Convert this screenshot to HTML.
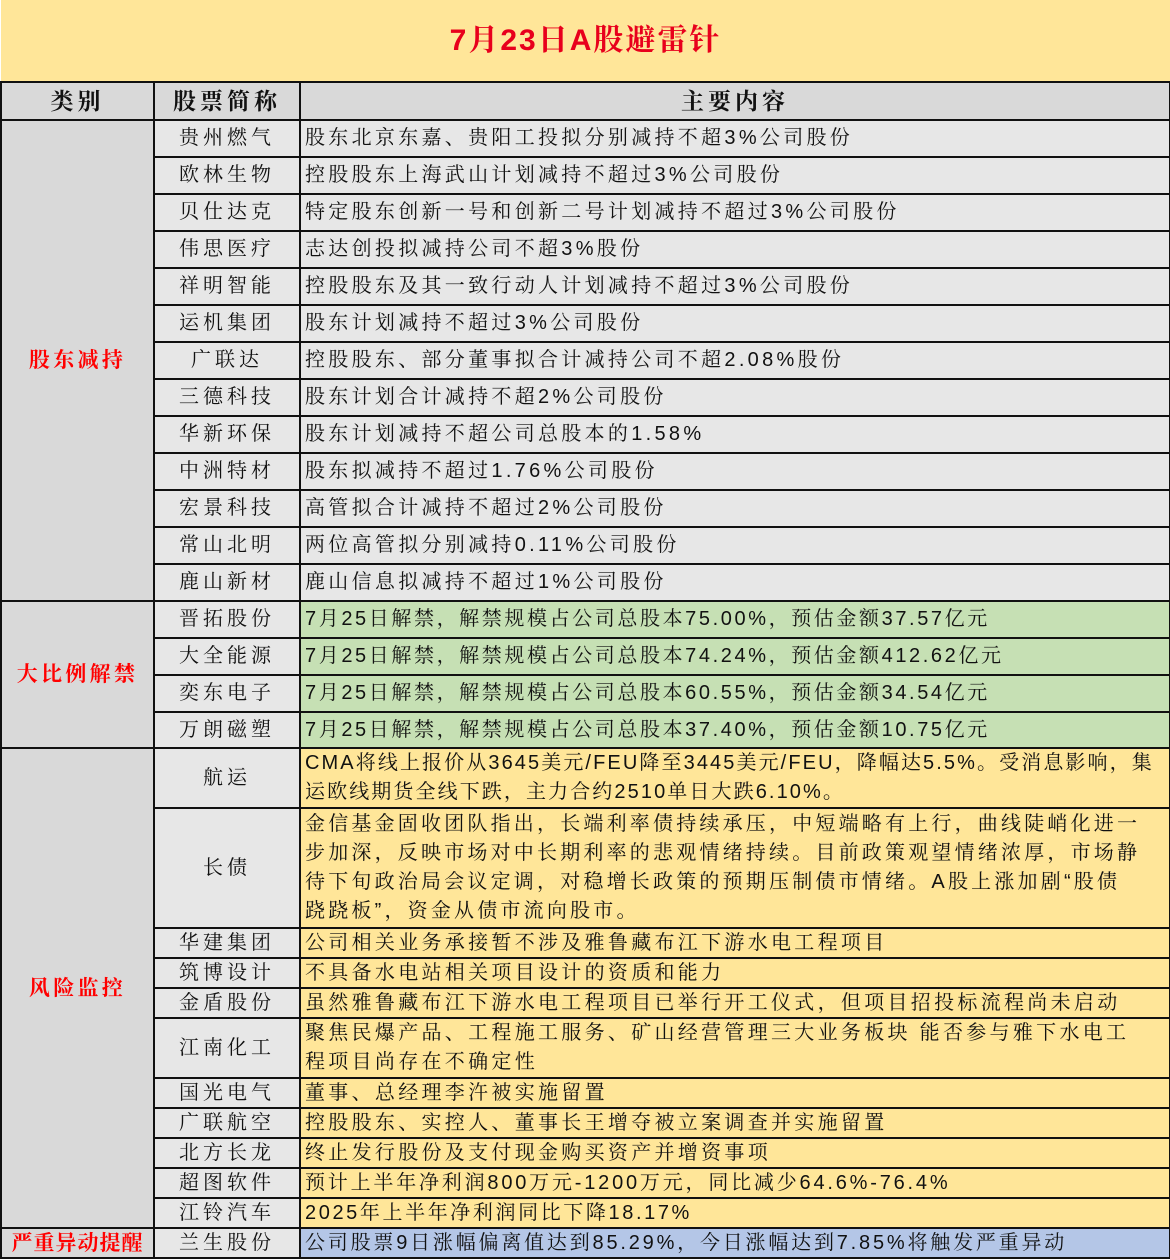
<!DOCTYPE html>
<html><head><meta charset="utf-8"><style>
body{margin:0;width:1170px;height:1260px;overflow:hidden;background:#fff;font-family:"Liberation Sans","Noto Serif CJK SC",serif;}
table{border-collapse:collapse;table-layout:fixed;width:1169px;position:absolute;left:0;top:0}
td{border:2px solid #111;padding:0;font-size:20px;color:#111;letter-spacing:3.3px;line-height:27px;overflow:hidden;white-space:nowrap}
.t{background:#FFE699;color:#e8001c;font-size:30px;font-weight:bold;text-align:center;letter-spacing:2px;border-top:none;border-left:none;border-right:none}
.h{background:#D9D9D9;font-weight:bold;font-size:23px;text-align:center;letter-spacing:4px}
.c{background:#D9D9D9;color:#f00;font-weight:bold;text-align:center;font-size:21px}
.n{background:#E7E7E7;text-align:center;letter-spacing:4px}
.g1{background:#E7E7E7;padding-left:4px}
.g2{background:#C6E0B4;padding-left:4px;letter-spacing:2.6px}
.g3{background:#FFE699;padding-left:4px}
.g4{background:#B4C6E7;padding-left:4px;letter-spacing:2.8px}
.m{line-height:29px}
</style></head><body>
<table>
<col style="width:153px"><col style="width:146px"><col style="width:870px">
<tr style="height:82px"><td class="t" colspan="3">7月23日A股避雷针</td></tr>
<tr style="height:38px"><td class="h">类别</td><td class="h">股票简称</td><td class="h">主要内容</td></tr>
<tr style="height:37px"><td class="c" rowspan="13">股东减持</td><td class="n">贵州燃气</td><td class="g1">股东北京东嘉、贵阳工投拟分别减持不超3%公司股份</td></tr>
<tr style="height:37px"><td class="n">欧林生物</td><td class="g1">控股股东上海武山计划减持不超过3%公司股份</td></tr>
<tr style="height:37px"><td class="n">贝仕达克</td><td class="g1">特定股东创新一号和创新二号计划减持不超过3%公司股份</td></tr>
<tr style="height:37px"><td class="n">伟思医疗</td><td class="g1">志达创投拟减持公司不超3%股份</td></tr>
<tr style="height:37px"><td class="n">祥明智能</td><td class="g1">控股股东及其一致行动人计划减持不超过3%公司股份</td></tr>
<tr style="height:37px"><td class="n">运机集团</td><td class="g1">股东计划减持不超过3%公司股份</td></tr>
<tr style="height:37px"><td class="n">广联达</td><td class="g1">控股股东、部分董事拟合计减持公司不超2.08%股份</td></tr>
<tr style="height:37px"><td class="n">三德科技</td><td class="g1">股东计划合计减持不超2%公司股份</td></tr>
<tr style="height:37px"><td class="n">华新环保</td><td class="g1">股东计划减持不超公司总股本的1.58%</td></tr>
<tr style="height:37px"><td class="n">中洲特材</td><td class="g1">股东拟减持不超过1.76%公司股份</td></tr>
<tr style="height:37px"><td class="n">宏景科技</td><td class="g1">高管拟合计减持不超过2%公司股份</td></tr>
<tr style="height:37px"><td class="n">常山北明</td><td class="g1">两位高管拟分别减持0.11%公司股份</td></tr>
<tr style="height:37px"><td class="n">鹿山新材</td><td class="g1">鹿山信息拟减持不超过1%公司股份</td></tr>
<tr style="height:37px"><td class="c" rowspan="4">大比例解禁</td><td class="n">晋拓股份</td><td class="g2">7月25日解禁，解禁规模占公司总股本75.00%，预估金额37.57亿元</td></tr>
<tr style="height:37px"><td class="n">大全能源</td><td class="g2">7月25日解禁，解禁规模占公司总股本74.24%，预估金额412.62亿元</td></tr>
<tr style="height:37px"><td class="n">奕东电子</td><td class="g2">7月25日解禁，解禁规模占公司总股本60.55%，预估金额34.54亿元</td></tr>
<tr style="height:36px"><td class="n">万朗磁塑</td><td class="g2">7月25日解禁，解禁规模占公司总股本37.40%，预估金额10.75亿元</td></tr>
<tr style="height:60px"><td class="c" rowspan="11">风险监控</td><td class="n">航运</td><td class="g3 m" style="letter-spacing:2.1px">CMA将线上报价从3645美元/FEU降至3445美元/FEU，降幅达5.5%。受消息影响，集<br>运欧线期货全线下跌，主力合约2510单日大跌6.10%。</td></tr>
<tr style="height:120px"><td class="n">长债</td><td class="g3 m" style="letter-spacing:3.2px">金信基金固收团队指出，长端利率债持续承压，中短端略有上行，曲线陡峭化进一<br>步加深，反映市场对中长期利率的悲观情绪持续。目前政策观望情绪浓厚，市场静<br>待下旬政治局会议定调，对稳增长政策的预期压制债市情绪。A股上涨加剧“股债<br>跷跷板”，资金从债市流向股市。</td></tr>
<tr style="height:30px"><td class="n">华建集团</td><td class="g3">公司相关业务承接暂不涉及雅鲁藏布江下游水电工程项目</td></tr>
<tr style="height:30px"><td class="n">筑博设计</td><td class="g3">不具备水电站相关项目设计的资质和能力</td></tr>
<tr style="height:30px"><td class="n">金盾股份</td><td class="g3">虽然雅鲁藏布江下游水电工程项目已举行开工仪式，但项目招投标流程尚未启动</td></tr>
<tr style="height:60px"><td class="n">江南化工</td><td class="g3 m">聚焦民爆产品、工程施工服务、矿山经营管理三大业务板块 能否参与雅下水电工<br>程项目尚存在不确定性</td></tr>
<tr style="height:30px"><td class="n">国光电气</td><td class="g3">董事、总经理李汻被实施留置</td></tr>
<tr style="height:30px"><td class="n">广联航空</td><td class="g3">控股股东、实控人、董事长王增夺被立案调查并实施留置</td></tr>
<tr style="height:30px"><td class="n">北方长龙</td><td class="g3">终止发行股份及支付现金购买资产并增资事项</td></tr>
<tr style="height:30px"><td class="n">超图软件</td><td class="g3" style="letter-spacing:2.8px">预计上半年净利润800万元-1200万元，同比减少64.6%-76.4%</td></tr>
<tr style="height:30px"><td class="n">江铃汽车</td><td class="g3" style="letter-spacing:2.6px">2025年上半年净利润同比下降18.17%</td></tr>
<tr style="height:30px"><td class="c" style="letter-spacing:1px">严重异动提醒</td><td class="n">兰生股份</td><td class="g4">公司股票9日涨幅偏离值达到85.29%，今日涨幅达到7.85%将触发严重异动</td></tr>
</table>
</body></html>
